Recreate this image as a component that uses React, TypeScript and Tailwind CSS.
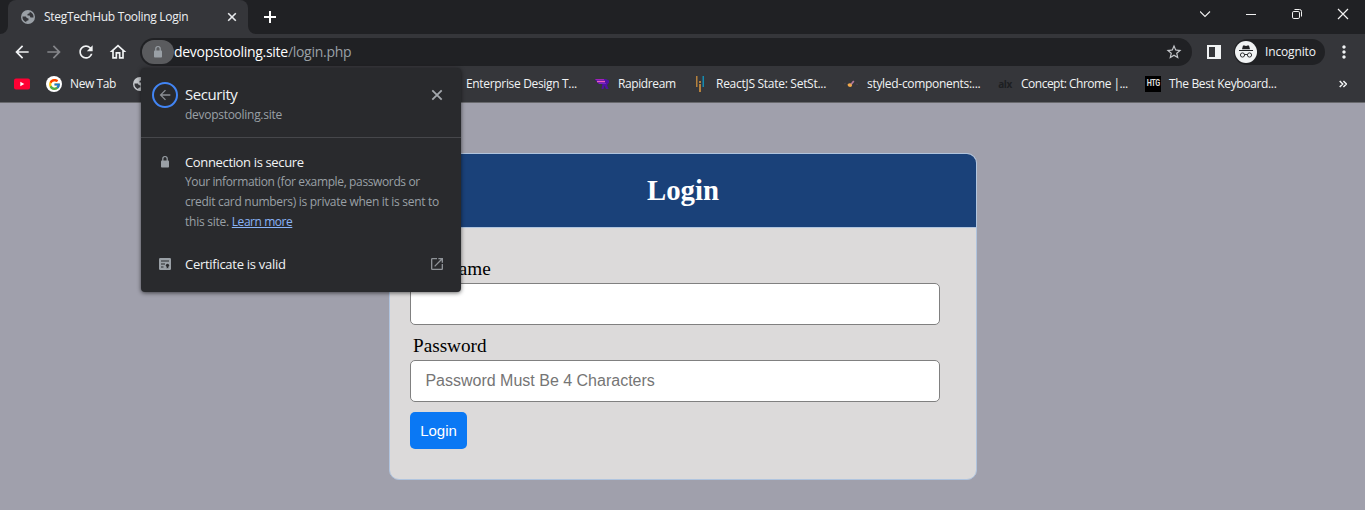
import type { ReactNode } from "react";
import {
  MdArrowBack,
  MdArrowForward,
  MdMoreVert,
  MdOpenInNew,
  MdOutlineHome,
  MdRefresh,
  MdStarBorder,
} from "react-icons/md";
import { FcGoogle } from "react-icons/fc";

function Globe({ className }: { className: string }) {
  return (
    <svg className={`h-4 w-4 shrink-0 ${className}`} viewBox="0 0 16 16">
      <path
        fill="currentColor"
        fillRule="evenodd"
        d="M8 1a7 7 0 1 1 0 14A7 7 0 0 1 8 1zM9.800 2.800L9.500 4.300L7.500 5V6.600H9.600L10.500 8.500H13.500A5.600 5.600 0 0 0 9.800 2.800zM2.500 7.600A5.600 5.600 0 0 0 6.300 13.300V12L8.500 11.200V9.600L6.800 8.900L5.800 7.600z"
      />
    </svg>
  );
}

function Lock({ className }: { className: string }) {
  return (
    <svg className={className} viewBox="0 0 16 16">
      <rect x="4" y="6.500" width="8" height="7" rx="0.800" fill="currentColor" />
      <path d="M5.800 7V4.700a2.200 2.200 0 0 1 4.400 0V7" fill="none" stroke="currentColor" strokeWidth="1.200" />
    </svg>
  );
}

function TabStrip() {
  return (
    <div className="flex h-[34px] bg-[#202124]">
      <svg className="mt-[26px] h-2 w-2 shrink-0" viewBox="0 0 8 8">
        <path d="M8 0v8H0a8 8 0 0 0 8-8z" fill="#35363a" />
      </svg>
      <div className="flex w-[240px] items-center rounded-t-lg bg-[#35363a] pl-3 pr-[9px]">
        <Globe className="text-[#9aa0a6]" />
        <span className="ml-2 w-[180px] whitespace-nowrap text-[12px] tracking-[-0.3px] text-[#eef0f2]">
          StegTechHub Tooling Login
        </span>
        <svg className="ml-auto h-[14px] w-[14px]" viewBox="0 0 14 14" stroke="#e8eaed" strokeWidth="1.6">
          <path d="M3.2 3.2l7.6 7.6M10.8 3.2L3.2 10.8" />
        </svg>
      </div>
      <svg className="mt-[26px] h-2 w-2 shrink-0" viewBox="0 0 8 8">
        <path d="M0 0v8h8a8 8 0 0 1-8-8z" fill="#35363a" />
      </svg>
      <svg className="ml-[7px] mt-[10px] h-[14px] w-[14px]" viewBox="0 0 14 14" stroke="#fff" strokeWidth="2">
        <path d="M7 1v12M1 7h12" />
      </svg>
      <svg className="ml-auto mt-[6px] h-4 w-[165px]" viewBox="0 0 165 16" fill="none" stroke="#f1f1f1" strokeWidth="1">
        <path d="M0 5.5l5 5 5-5" strokeWidth="1.100" />
        <path d="M46 8.5h10" />
        <rect x="92.5" y="5.5" width="7" height="7" rx="1.3" />
        <path d="M94.5 3.5h5a2 2 0 0 1 2 2v5" />
        <path d="M138 3l10 10M148 3l-10 10" strokeWidth="1.2" />
      </svg>
    </div>
  );
}

function Incognito() {
  return (
    <svg className="h-[22px] w-[22px]" viewBox="0 0 22 22">
      <circle cx="11" cy="11" r="11" fill="#f1f3f4" />
      <path d="M8 4.500h1.500l1.500.5 1.500-.5H14l1 3.700H7z" fill="#202124" />
      <path d="M4 9.500h14" stroke="#202124" strokeWidth="1" />
      <g fill="none" stroke="#303134" strokeWidth="1">
        <circle cx="7.500" cy="14" r="2.100" />
        <circle cx="14.500" cy="14" r="2.100" />
        <path d="M9.600 13.700q1.400-.6 2.800 0" />
      </g>
    </svg>
  );
}

function Toolbar() {
  return (
    <div className="flex h-9 items-center bg-[#35363a] pl-3">
      <MdArrowBack className="h-5 w-5 text-[#f1f3f4]" />
      <MdArrowForward className="ml-3 h-5 w-5 text-[#85868a]" />
      <MdRefresh className="ml-3 h-5 w-5 text-[#f1f3f4]" />
      <MdOutlineHome className="ml-3 h-5 w-5 text-[#f1f3f4]" />
      <div className="ml-3 flex h-7 w-[1052px] items-center rounded-full bg-[#202124] pl-[2px] pr-[9px]">
        <div className="flex h-6 w-8 items-center justify-center rounded-full bg-[#5a5b5e]">
          <Lock className="h-4 w-4 text-[#9aa0a6]" />
        </div>
        <span className="whitespace-nowrap pb-px text-[14px] leading-5 tracking-[-0.28px] text-white">
          devopstooling.site<span className="text-[#9aa0a6]">/login.php</span>
        </span>
        <MdStarBorder className="ml-auto h-[18px] w-[18px] text-[#c4c7cb]" />
      </div>
      <svg className="ml-[15px] h-[14px] w-[14px]" viewBox="0 0 14 14">
        <path fillRule="evenodd" d="M0 0h14v14H0zM2 2v10h6V2z" fill="#f1f3f4" />
      </svg>
      <div className="ml-[13px] flex h-[26px] w-[91px] items-center rounded-full bg-[#202124] pl-[1px]">
        <Incognito />
        <span className="ml-2 text-[12px] tracking-[-0.15px] text-[#f1f3f4]">Incognito</span>
      </div>
      <MdMoreVert className="ml-[9px] h-5 w-5 text-[#f1f3f4]" />
    </div>
  );
}

function Bookmark({ icon, label, className }: { icon: ReactNode; label: string; className: string }) {
  return (
    <div className={`flex shrink-0 items-center ${className}`}>
      <span className="flex w-4 shrink-0 justify-center">{icon}</span>
      <span className="ml-2 whitespace-nowrap text-[12px]">{label}</span>
    </div>
  );
}

function BookmarkBar() {
  return (
    <div className="flex h-[33px] items-center border-b border-[#68696d] bg-[#35363a] pb-1 pl-[14px] text-[#f1f3f4]">
      <svg className="mr-4 h-4 w-4 shrink-0" viewBox="0 0 16 16">
        <rect y="2.5" width="16" height="11" rx="2" fill="#f03" />
        <path d="M6.3 5.8v4.4l4-2.2z" fill="#fff" />
      </svg>
      <Bookmark
        className="w-[86px] tracking-[-0.4px]"
        label="New Tab"
        icon={
          <span className="flex h-4 w-4 items-center justify-center rounded-full bg-white">
            <FcGoogle className="h-[13px] w-[13px]" />
          </span>
        }
      />
      <Globe className="text-[#c4c7cb]" />
      <div className="ml-[294px]">
        <Bookmark className="w-[152px] tracking-[-0.33px]" label="Enterprise Design T..." icon={null} />
      </div>
      <Bookmark
        className="w-[98px] tracking-[-0.4px]"
        label="Rapidream"
        icon={
          <svg className="h-4 w-4" viewBox="0 0 16 16">
            <path d="M1 3h11l3 1.500v2L13 9l1.500 4h-2.500L10.500 9.500 9.500 13H7.500L8.500 8H4V7L2 5z" fill="#5011a5" />
            <path d="M1 3h9v1H2z" fill="#a020b8" />
            <path d="M3 4.800h8v1.500H3z" fill="#f05cc0" />
            <path d="M5 7h7v1H5z" fill="#7a22c8" />
          </svg>
        }
      />
      <Bookmark
        className="w-[151px] tracking-[-0.28px]"
        label="ReactJS State: SetSt..."
        icon={
          <svg className="h-4 w-4" viewBox="0 0 16 16">
            <path d="M4 0h1.500v11H4zM7 5h2v2H7zM7 8h2v8H7z" fill="#b5813d" />
            <path d="M10.500 0H12v11h-1.500z" fill="#168bb0" />
          </svg>
        }
      />
      <Bookmark
        className="w-[154px] tracking-[-0.3px]"
        label="styled-components:..."
        icon={
          <svg className="h-4 w-4" viewBox="0 0 16 16">
            <path d="M4.500 8.500q2-2 4.500-.500Q9.500 11 7 11 4.500 10.800 4.500 8.500z" fill="#f1a94c" />
            <path d="M8.200 8.200L10.800 5" stroke="#b3789a" strokeWidth="1.700" />
            <path d="M1 8l2-1M13 8l2 .500" stroke="#484250" />
          </svg>
        }
      />
      <Bookmark
        className="w-[148px] tracking-[-0.5px]"
        label="Concept: Chrome |..."
        icon={<span className="text-[10px] font-bold leading-none text-[#1d1f22]">alx</span>}
      />
      <Bookmark
        className="w-[140px] tracking-[-0.35px]"
        label="The Best Keyboard..."
        icon={
          <span className="flex h-4 w-4 items-center justify-center bg-black font-['Roboto'] text-[8px] font-bold leading-none tracking-[-0.4px] text-[#ddd]">
            <span className="scale-x-90 scale-y-110">HTG</span>
          </span>
        }
      />
      <svg className="ml-auto mr-[18px] h-2 w-2 shrink-0" viewBox="0 0 8 8" fill="none" stroke="#f1f3f4" strokeWidth="1.5">
        <path d="M.7 1l3 3-3 3M4.400 1l3 3-3 3" />
      </svg>
    </div>
  );
}

function SecurityPopup() {
  return (
    <div className="absolute left-[141px] top-[68px] h-[224px] w-[320px] rounded-[4px] bg-[#292a2d] shadow-[0_1px_4px_rgba(0,0,0,0.6)]">
      <div className="flex h-[70px] border-b border-[#46474b] pl-[11px] pt-[14px]">
        <div className="flex h-[26px] w-[26px] items-center justify-center rounded-full border-2 border-[#4285f4]">
          <MdArrowBack className="h-4 w-4 text-[#8b8f94]" />
        </div>
        <div className="ml-[7px] w-[244px]">
          <div className="text-[15px] leading-6 tracking-[-0.42px] text-[#f1f3f4]">Security</div>
          <div className="pt-[2px] text-[12px] leading-[14px] tracking-[-0.28px] text-[#9aa0a6]">devopstooling.site</div>
        </div>
        <svg className="mt-[5px] h-4 w-4" viewBox="0 0 16 16" stroke="#a4a8ad" strokeWidth="1.800">
          <path d="M3.300 3.300l9.400 9.400M12.700 3.300l-9.400 9.400" />
        </svg>
      </div>
      <div className="flex pl-4 pt-[14px]">
        <Lock className="mt-[2px] h-4 w-4 text-[#9aa0a6]" />
        <div className="ml-3 whitespace-nowrap">
          <div className="text-[13px] leading-5 tracking-[-0.35px] text-[#f1f3f4]">Connection is secure</div>
          <div className="text-[12px] leading-5 tracking-[-0.37px] text-[#9aa0a6]">
            Your information (for example, passwords or
            <br />
            <span className="tracking-[-0.3px]">credit card numbers) is private when it is sent to</span>
            <br />
            <span className="tracking-[-0.25px]">this site. </span>
            <span className="tracking-[-0.45px] text-[#8ab4f8] underline">Learn more</span>
          </div>
        </div>
      </div>
      <div className="mt-[22px] flex items-center pl-4 pr-4">
        <svg className="h-4 w-4" viewBox="0 0 16 16">
          <rect x="2" y="2" width="12" height="12" rx="1.2" fill="#9aa0a6" />
          <path d="M4 5h8M4 8h4M4 11h2.500" stroke="#292a2d" strokeWidth="1.1" />
          <circle cx="10.500" cy="9.300" r="1.600" fill="#292a2d" />
          <path d="M9.700 10h1.600v2.600l-.800-.500-.800.500z" fill="#292a2d" />
        </svg>
        <span className="ml-3 text-[13px] leading-5 tracking-[-0.28px] text-[#f1f3f4]">Certificate is valid</span>
        <MdOpenInNew className="ml-auto h-4 w-4 text-[#8f9398]" />
      </div>
    </div>
  );
}

function LoginPage() {
  return (
    <main className="flex flex-1 items-start bg-[#a0a0ac] pl-[389px] pt-[50px]">
      <div className="h-[327px] w-[588px] overflow-hidden rounded-[10px] border border-[#b0c4de] bg-[#dcdada]">
        <h2 className="flex h-[74px] items-center justify-center border-b border-[#b0c4de] bg-[#1a4179] pt-px font-['Liberation_Serif',serif] text-[28.8px] font-bold text-white">
          Login
        </h2>
        <form className="flex flex-col items-start pl-5 pt-[29px]">
          <label className="ml-[3px] h-[26px] font-['Liberation_Serif',serif] text-[19.2px] leading-[23px] text-black">
            Username
          </label>
          <input className="h-[42px] w-[530px] rounded-[5px] border border-[#808080] bg-white px-[15px] font-['Liberation_Sans',sans-serif] text-[16px]" />
          <label className="ml-[3px] mt-[9px] h-[26px] font-['Liberation_Serif',serif] text-[19.2px] leading-[23px] text-black">
            Password
          </label>
          <input
            placeholder="Password Must Be 4 Characters"
            className="h-[42px] w-[530px] rounded-[5px] border border-[#808080] bg-white px-[14.4px] font-['Liberation_Sans',sans-serif] text-[16px] placeholder:text-[#757575]"
          />
          <button
            type="button"
            className="mt-[10px] h-[37px] w-[57px] rounded-[5px] bg-[#0a78f4] pt-px font-['Liberation_Sans',sans-serif] text-[15px] text-white"
          >
            Login
          </button>
        </form>
      </div>
    </main>
  );
}

export default function App() {
  return (
    <div className="relative flex h-[510px] w-[1365px] flex-col overflow-hidden font-['Open_Sans','Noto_Sans',sans-serif]">
      <TabStrip />
      <Toolbar />
      <BookmarkBar />
      <LoginPage />
      <SecurityPopup />
    </div>
  );
}
